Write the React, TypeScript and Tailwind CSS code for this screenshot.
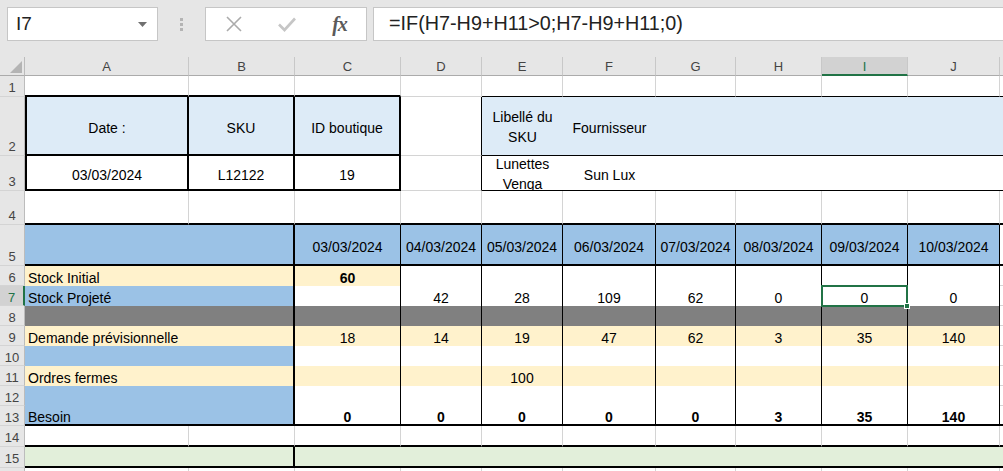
import { ReactNode } from "react";

type Bk = "g" | "n" | "t" | "k";

type Cell = {
  span?: 2 | 5 | 9;
  bg?: string;
  r?: Bk;
  b?: Bk;
  l?: Bk;
  text?: string;
  align?: "l" | "c";
  bold?: boolean;
  wrap?: boolean;
  sel?: boolean;
};

// Excel-like border keys -> literal tailwind classes
const R: Record<Bk, string> = {
  g: "border-r border-r-[#d4d4d4]",
  n: "",
  t: "border-r border-r-black",
  k: "border-r-2 border-r-black",
};
const B: Record<Bk, string> = {
  g: "border-b border-b-[#d4d4d4]",
  n: "",
  t: "border-b border-b-black",
  k: "border-b-2 border-b-black",
};
const L: Record<Bk, string> = {
  g: "border-l border-l-[#d4d4d4]",
  n: "",
  t: "border-l border-l-black",
  k: "border-l-2 border-l-black",
};
const SPAN = { 2: "col-span-2", 5: "col-span-5", 9: "col-span-9" };

const lightBlue = "bg-[#ddebf7]";
const blue = "bg-[#9bc2e6]";
const cream = "bg-[#fff2cc]";
const gray = "bg-[#808080]";
const green = "bg-[#e2efda]";
const white = "bg-white";

const COLS = ["A", "B", "C", "D", "E", "F", "G", "H", "I", "J", "K"];
const dates = ["03/03/2024", "04/03/2024", "05/03/2024", "06/03/2024", "07/03/2024", "08/03/2024", "09/03/2024", "10/03/2024"];

function plainRow(bottom: (i: number) => Bk): Cell[] {
  return COLS.map((_, i) => ({ r: "g", b: bottom(i) }));
}

// rows 6..13 of the planning table
function planRow(
  label: string,
  labelBg: string,
  bodyBg: (i: number) => string,
  values: string[],
  opts: { last?: boolean; bold?: (i: number) => boolean; sel?: number } = {}
): Cell[] {
  const b: Bk = opts.last ? "k" : "n";
  const cells: Cell[] = [{ span: 2, bg: labelBg, r: "k", b, text: label, align: "l" }];
  for (let i = 0; i < 8; i++) {
    cells.push({
      bg: bodyBg(i),
      r: "t",
      b,
      text: values[i] ?? "",
      bold: opts.bold ? opts.bold(i) : false,
      sel: opts.sel === i,
    });
  }
  cells.push({ r: "g", b: opts.last ? "k" : "g", bg: white });
  return cells;
}

const rows: { num: string; tall?: boolean; cells: Cell[] }[] = [
  { num: "1", cells: plainRow((i) => (i < 3 ? "k" : i === 3 ? "g" : "t")) },
  {
    num: "2",
    tall: true,
    cells: [
      { l: "k", r: "k", b: "k", bg: lightBlue, text: "Date :" },
      { r: "k", b: "k", bg: lightBlue, text: "SKU" },
      { r: "k", b: "k", bg: lightBlue, text: "ID boutique" },
      { r: "t", b: "g" },
      { b: "t", bg: lightBlue, text: "Libellé du SKU", wrap: true },
      { b: "t", bg: lightBlue, text: "Fournisseur" },
      { span: 5, b: "t", bg: lightBlue },
    ],
  },
  {
    num: "3",
    tall: true,
    cells: [
      { l: "k", r: "k", b: "k", bg: white, text: "03/03/2024" },
      { r: "k", b: "k", bg: white, text: "L12122" },
      { r: "k", b: "k", bg: white, text: "19" },
      { r: "t", b: "g" },
      { b: "t", bg: white, text: "Lunettes Venga", wrap: true },
      { b: "t", bg: white, text: "Sun Lux" },
      { span: 5, b: "t", bg: white },
    ],
  },
  { num: "4", tall: true, cells: plainRow(() => "k") },
  {
    num: "5",
    tall: true,
    cells: [
      { span: 2, bg: blue, r: "k", b: "k" },
      ...dates.map((d): Cell => ({ bg: blue, r: "t", b: "k", text: d })),
      { r: "g", b: "k", bg: white },
    ],
  },
  { num: "6", cells: planRow("Stock Initial", cream, (i) => (i === 0 ? cream : white), ["60"], { bold: (i) => i === 0 }) },
  { num: "7", cells: planRow("Stock Projeté", blue, () => white, ["", "42", "28", "109", "62", "0", "0", "0"], { sel: 6 }) },
  { num: "8", cells: planRow("", gray, () => gray, []) },
  { num: "9", cells: planRow("Demande prévisionnelle", cream, () => cream, ["18", "14", "19", "47", "62", "3", "35", "140"]) },
  { num: "10", cells: planRow("", blue, () => white, []) },
  { num: "11", cells: planRow("Ordres fermes", cream, () => cream, ["", "", "100"]) },
  { num: "12", cells: planRow("", blue, () => white, []) },
  {
    num: "13",
    cells: planRow("Besoin", blue, () => white, ["0", "0", "0", "0", "0", "3", "35", "140"], { last: true, bold: () => true }),
  },
  { num: "14", cells: plainRow(() => "k") },
  {
    num: "15",
    cells: [
      { span: 2, bg: green, r: "k", b: "k" },
      { span: 9, bg: green, b: "k" },
    ],
  },
  { num: "16", cells: plainRow(() => "g") },
];

function SheetCell({ c }: { c: Cell }) {
  const cls = [
    "relative min-h-0 flex items-center text-[14px] text-black",
    c.sel ? "overflow-visible" : "overflow-hidden",
    c.span ? SPAN[c.span] : "",
    c.bg ?? "bg-white",
    R[c.r ?? "n"],
    B[c.b ?? "n"],
    L[c.l ?? "n"],
    c.align === "l" ? "justify-start pl-[3px]" : "justify-center",
    c.bold ? "font-bold" : "",
  ].join(" ");
  return (
    <div className={cls}>
      {c.wrap ? (
        <span className="block w-full text-center leading-[20px] whitespace-normal px-[2px] translate-y-[1px]">{c.text}</span>
      ) : (
        <span className="whitespace-nowrap leading-none translate-y-[2px]">{c.text}</span>
      )}
      {c.sel && (
        <div className="absolute -top-px -left-px -right-px -bottom-px z-10 border-2 border-[#217346]">
          <div className="absolute -right-[4px] -bottom-[4px] w-[6px] h-[6px] bg-[#217346] border border-white" />
        </div>
      )}
    </div>
  );
}

function RowHead({ num, tall }: { num: string; tall?: boolean }) {
  const selected = num === "7";
  return (
    <div
      className={
        "min-h-0 overflow-hidden flex justify-center text-[13px] leading-none border-b border-b-[#d4d4d4] " +
        (tall ? "items-end pb-[2px] " : "items-center pt-[3px] ") +
        (selected
          ? "bg-[#d2d2d2] text-[#217346] border-r-2 border-r-[#217346]"
          : "bg-[#e6e6e6] text-[#444] border-r border-r-[#bcbcbc]")
      }
    >
      {num}
    </div>
  );
}

function ToolBtn({ children }: { children: ReactNode }) {
  return <div className="w-[54px] h-full flex items-center justify-center">{children}</div>;
}

export default function App() {
  return (
    <div className="w-[1003px] h-[471px] overflow-hidden bg-white" style={{ fontFamily: '"Liberation Sans", Arial, sans-serif' }}>
      {/* formula bar */}
      <div className="h-[57px] bg-[#e6e6e6] flex items-start pt-[7px]">
        <div className="ml-[7px] w-[151px] h-[34px] bg-white border border-[#c6c6c6] flex items-center justify-between pl-[8px] pr-[10px]">
          <span className="text-[19px] text-[#222]">I7</span>
          <svg width="9" height="5" viewBox="0 0 9 5">
            <path d="M0 0h9L4.5 5z" fill="#707070" />
          </svg>
        </div>
        <div className="w-[47px] h-[34px] flex flex-col items-center justify-center gap-[2px]">
          <span className="w-[3px] h-[3px] bg-[#b4b4b4]" />
          <span className="w-[3px] h-[3px] bg-[#b4b4b4]" />
          <span className="w-[3px] h-[3px] bg-[#b4b4b4]" />
        </div>
        <div className="w-[162px] h-[34px] bg-white border border-[#c6c6c6] flex items-center pl-[1px]">
          <ToolBtn>
            <svg width="18" height="18" viewBox="0 0 18 18">
              <path d="M2 2L16 16M16 2L2 16" stroke="#ababab" strokeWidth="1.6" />
            </svg>
          </ToolBtn>
          <ToolBtn>
            <svg width="20" height="16" viewBox="0 0 20 16">
              <path d="M2 8.5L7.5 14L18 2.5" stroke="#c6c6c6" strokeWidth="2.6" fill="none" />
            </svg>
          </ToolBtn>
          <ToolBtn>
            <span className="italic text-[20px] text-[#5a5a5a] font-bold tracking-[-1px]" style={{ fontFamily: '"Liberation Serif", serif' }}>
              fx
            </span>
          </ToolBtn>
        </div>
        <div className="ml-[6px] flex-1 h-[34px] bg-white border border-[#c6c6c6] border-r-0 flex items-center pl-[15px]">
          <span className="text-[19.8px] text-[#222] whitespace-nowrap">=IF(H7-H9+H11&gt;0;H7-H9+H11;0)</span>
        </div>
      </div>

      {/* sheet */}
      <div className="grid grid-cols-[25px_164px_106px_106px_81px_81px_93px_80px_86px_86px_92px_60px] grid-rows-[19px_21px_59px_35px_34px_41px_20px_20px_20px_20px_20px_20px_20px_20px_21px_21px_20px]">
        {/* column headers */}
        <div className="bg-[#e6e6e6] border-r border-r-[#bcbcbc] border-b border-b-[#ababab] flex items-end justify-end p-[2px]">
          <svg width="12" height="12" viewBox="0 0 12 12">
            <path d="M12 0V12H0z" fill="#b4b4b4" />
          </svg>
        </div>
        {COLS.map((c) => (
          <div
            key={c}
            className={
              "min-h-0 flex items-center justify-center text-[13px] leading-none pt-[1px] border-r border-r-[#c8c8c8] " +
              (c === "I"
                ? "bg-[#d2d2d2] text-[#217346] border-b-2 border-b-[#217346]"
                : "bg-[#e6e6e6] text-[#444] border-b border-b-[#ababab]")
            }
          >
            {c}
          </div>
        ))}

        {rows.map((row) => (
          <div key={row.num} className="contents">
            <RowHead num={row.num} tall={row.tall} />
            {row.cells.map((c, i) => (
              <SheetCell key={i} c={c} />
            ))}
          </div>
        ))}
      </div>
    </div>
  );
}
